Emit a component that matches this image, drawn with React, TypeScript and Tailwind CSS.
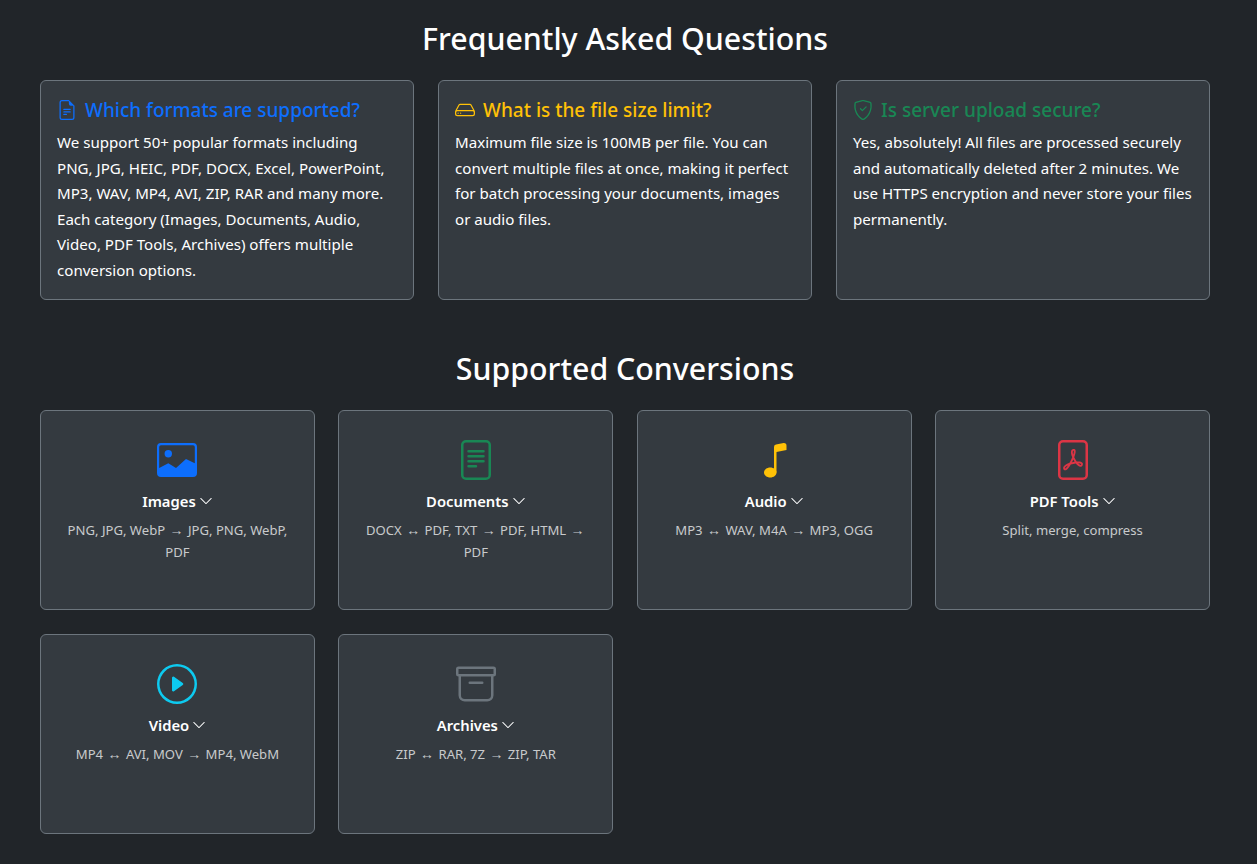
import { BsChevronDown, BsFileEarmarkText, BsHdd, BsShieldCheck, BsFileText, BsMusicNote, BsFilePdf, BsPlayCircle, BsArchive } from "react-icons/bs";
import type { ReactNode } from "react";

const faqs = [
  {
    title: "Which formats are supported?",
    icon: <BsFileEarmarkText className="h-5 w-5 shrink-0" />,
    color: "text-[#0d6efd]",
    text: "We support 50+ popular formats including PNG, JPG, HEIC, PDF, DOCX, Excel, PowerPoint, MP3, WAV, MP4, AVI, ZIP, RAR and many more. Each category (Images, Documents, Audio, Video, PDF Tools, Archives) offers multiple conversion options.",
  },
  {
    title: "What is the file size limit?",
    icon: <BsHdd className="h-5 w-5 shrink-0" />,
    color: "text-[#ffc107]",
    text: "Maximum file size is 100MB per file. You can convert multiple files at once, making it perfect for batch processing your documents, images or audio files.",
  },
  {
    title: "Is server upload secure?",
    icon: <BsShieldCheck className="h-5 w-5 shrink-0" />,
    color: "text-[#198754]",
    text: "Yes, absolutely! All files are processed securely and automatically deleted after 2 minutes. We use HTTPS encryption and never store your files permanently.",
  },
];

function ImageIcon() {
  return (
    <svg viewBox="0 0 40 34" className="h-[34px] w-10" fill="#0d6efd">
      <path fillRule="evenodd" d="M4 0h32a4 4 0 0 1 4 4v26a4 4 0 0 1-4 4H4a4 4 0 0 1-4-4V4a4 4 0 0 1 4-4Zm0 2.2A1.8 1.8 0 0 0 2.2 4v21l9.1-4.7 7.7 4.7 10-9 8.8 4.3V4A1.8 1.8 0 0 0 36 2.2H4Z" />
      <circle cx="11.3" cy="10.7" r="3.7" />
    </svg>
  );
}

const conversions: { title: string; icon: ReactNode; text: string }[] = [
  { title: "Images", icon: <ImageIcon />, text: "PNG, JPG, WebP → JPG, PNG, WebP, PDF" },
  { title: "Documents", icon: <BsFileText className="h-10 w-10 text-[#198754]" />, text: "DOCX ↔ PDF, TXT → PDF, HTML → PDF" },
  { title: "Audio", icon: <BsMusicNote className="h-10 w-10 text-[#ffc107]" />, text: "MP3 ↔ WAV, M4A → MP3, OGG" },
  { title: "PDF Tools", icon: <BsFilePdf className="h-10 w-10 text-[#dc3545]" />, text: "Split, merge, compress" },
  { title: "Video", icon: <BsPlayCircle className="h-10 w-10 text-[#0dcaf0]" />, text: "MP4 ↔ AVI, MOV → MP4, WebM" },
  { title: "Archives", icon: <BsArchive className="h-10 w-10 text-[#6c757d]" />, text: "ZIP ↔ RAR, 7Z → ZIP, TAR" },
];

// arrows come from a font with wider glyphs
function WithArrows({ text }: { text: string }) {
  return (
    <>
      {text.split(/([→↔])/).map((part, i) =>
        part === "→" || part === "↔" ? (
          <span key={i} className="mx-[1px] text-[14px] [font-family:'Liberation_Sans',sans-serif]">{part}</span>
        ) : (
          part
        )
      )}
    </>
  );
}

export default function App() {
  return (
    <div className="min-h-[864px] bg-[#212529] pl-10 pr-[47px] text-white [font-family:'Noto_Sans',sans-serif]">
      {/* FAQ */}
      <h2 className="pt-[20px] pb-[22px] text-center text-[30.3px] leading-[38px] font-medium">Frequently Asked Questions</h2>
      <div className="grid grid-cols-3 gap-6">
        {faqs.map((f) => (
          <div key={f.title} className="h-[220px] rounded-md border border-[#6c757d] bg-[#343a40] p-4">
            <h5 className={`mb-[7px] flex items-center gap-2 text-[19px] leading-[26px] font-medium ${f.color}`}>
              {f.icon}
              <span>{f.title}</span>
            </h5>
            <p className="text-[15.1px] leading-[25.6px]">{f.text}</p>
          </div>
        ))}
      </div>

      {/* Supported conversions */}
      <h2 className="pt-[50px] pb-[22px] text-center text-[30.3px] leading-[38px] font-medium">Supported Conversions</h2>
      <div className="grid grid-cols-4 gap-x-[23.5px] gap-y-6 pb-[30px]">
        {conversions.map((c) => (
          <div key={c.title} className="flex h-[200px] flex-col items-center rounded-md border border-[#6c757d] bg-[#343a40] px-6 pt-[29px] text-center">
            <div className="flex h-10 items-center justify-center">{c.icon}</div>
            <div className="mt-[9px] flex items-center gap-[3px] text-[14.8px] leading-6 font-semibold">
              <span>{c.title}</span>
              <BsChevronDown className="h-3.5 w-3.5" />
            </div>
            <p className="mt-[6px] text-[13.1px] leading-[22px] text-[#c8cacc]"><WithArrows text={c.text} /></p>
          </div>
        ))}
      </div>
    </div>
  );
}
